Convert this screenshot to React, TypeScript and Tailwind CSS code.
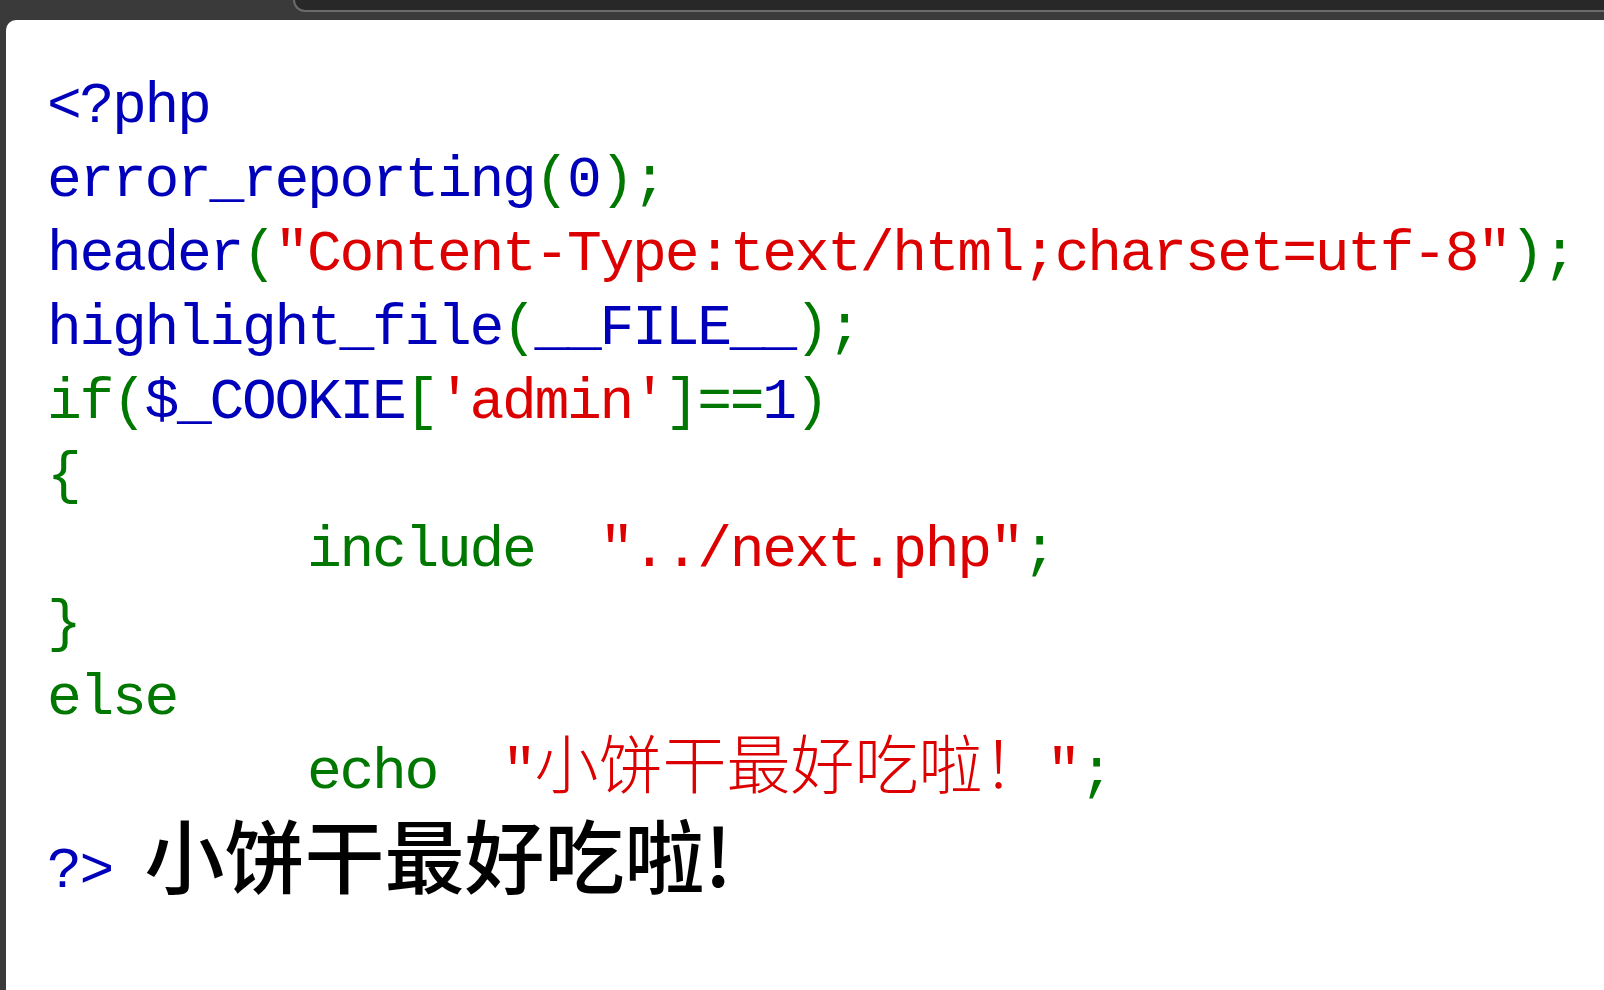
import React from 'react';

type Seg = { t: string; c: string; cjk?: boolean };

const B = 'text-[#0000bb]';
const G = 'text-[#007700]';
const R = 'text-[#dd0000]';

// source lines, coloured like php's highlight_file()
const lines: Seg[][] = [
  [{ t: '<?php', c: B }],
  [{ t: 'error_reporting', c: B }, { t: '(', c: G }, { t: '0', c: B }, { t: ');', c: G }],
  [
    { t: 'header', c: B },
    { t: '(', c: G },
    { t: '"Content-Type:text/html;charset=utf-8"', c: R },
    { t: ');', c: G },
  ],
  [{ t: 'highlight_file', c: B }, { t: '(', c: G }, { t: '__FILE__', c: B }, { t: ');', c: G }],
  [
    { t: 'if(', c: G },
    { t: '$_COOKIE', c: B },
    { t: '[', c: G },
    { t: "'admin'", c: R },
    { t: ']==', c: G },
    { t: '1', c: B },
    { t: ')', c: G },
  ],
  [{ t: '{', c: G }],
  [{ t: '        include  ', c: G }, { t: '"../next.php"', c: R }, { t: ';', c: G }],
  [{ t: '}', c: G }],
  [{ t: 'else', c: G }],
  [
    { t: '        echo  ', c: G },
    { t: '"', c: R },
    { t: '小饼干最好吃啦！', c: R, cjk: true },
    { t: '"', c: R },
    { t: ';', c: G },
  ],
];

function Segment({ s }: { s: Seg }) {
  if (s.cjk) {
    return (
      <span className={`${s.c} font-[Noto_Sans_CJK_SC,sans-serif] text-[64px] leading-[40px] tracking-normal font-light`}>
        {s.t}
      </span>
    );
  }
  return <span className={s.c}>{s.t}</span>;
}

export default function App() {
  return (
    <div className="h-screen flex flex-col bg-[#3a3a3a] overflow-hidden">
      {/* browser chrome strip */}
      <div className="flex h-[20px] shrink-0">
        <div className="w-[293px]" />
        <div className="flex-1 h-[12px] bg-[#282828] border-l-2 border-b-2 border-[#6b6b6b] rounded-bl-[12px]" />
      </div>

      <div className="flex-1 pl-[6px]">
        <div className="h-full bg-white rounded-tl-[10px] pl-[41px] pt-[50px]">
          <code className="block font-[Liberation_Mono,Noto_Sans_CJK_SC,monospace] text-[58px] tracking-[-2.3px] leading-[74px] whitespace-pre">
            {lines.map((line, i) => (
              <div key={i}>
                {line.map((s, j) => (
                  <Segment key={j} s={s} />
                ))}
              </div>
            ))}
            <div>
              <span className={B}>?&gt; </span>
              <span className="font-[Noto_Sans_CJK_SC,sans-serif] text-[80px] leading-[85px] tracking-normal font-medium text-black">
                小饼干最好吃啦!
              </span>
            </div>
          </code>
        </div>
      </div>
    </div>
  );
}
